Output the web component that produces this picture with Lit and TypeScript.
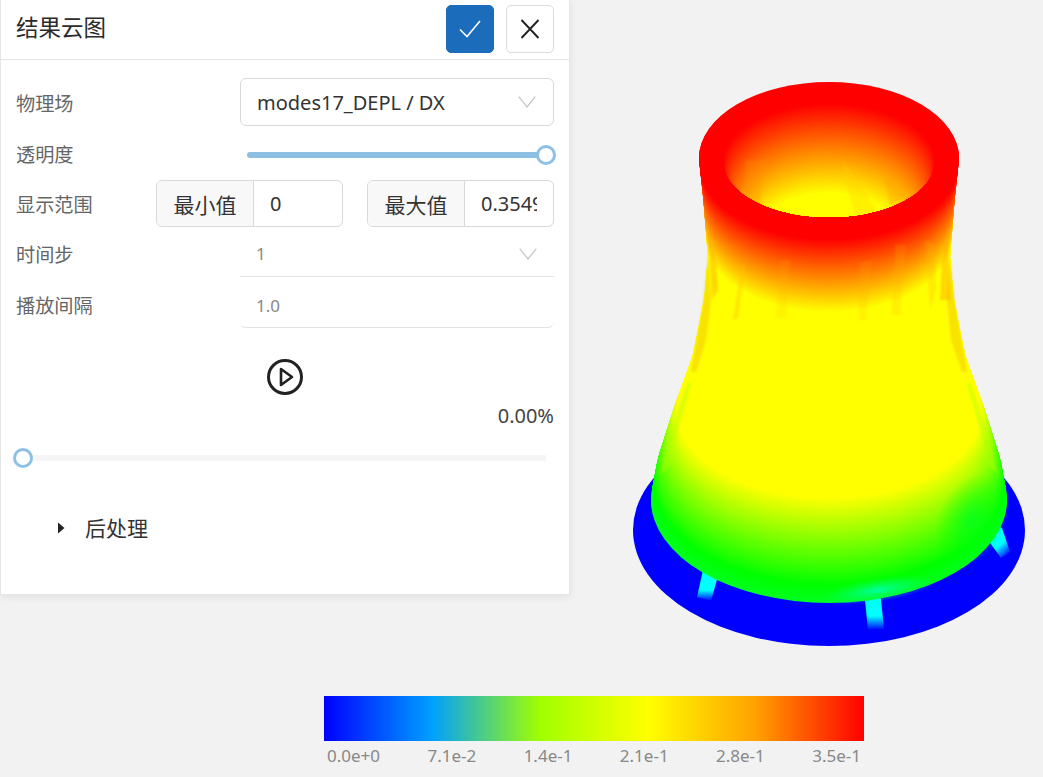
import { LitElement, html, css, svg } from "lit";
import { customElement } from "lit/decorators.js";

type P = [number, number];
const RX: P[] = [[158,130],[195,126],[257,121],[303,125],[337,131.5],[370,138.5],[425,158],[473,173],[500,178]];
const lerp = (a: number, b: number, t: number) => a + (b - a) * t;
const clamp = (t: number) => Math.max(0, Math.min(1, t));
function rxAt(cy: number) {
  for (let i = 0; i < RX.length - 1; i++) {
    if (cy <= RX[i + 1][0]) return lerp(RX[i][1], RX[i + 1][1], (cy - RX[i][0]) / (RX[i + 1][0] - RX[i][0]));
  }
  return 178;
}
const rgb = (r: number, g: number, b: number) => `rgb(${Math.round(r)},${Math.round(g)},${Math.round(b)})`;
function bodyColor(cy: number) {
  if (cy < 165) return rgb(255, 0, 0);
  if (cy < 242) return rgb(255, 255 * ((cy - 165) / 77), 0);
  if (cy < 410) return rgb(255, 255, 0);
  if (cy < 484) return rgb(255 * (1 - (cy - 410) / 74), 255, 0);
  return rgb(0, 255, 255 * clamp((cy - 484) / 40) * 0.3);
}

const rings = () => {
  const out = [];
  for (let cy = 500; cy >= 158; cy -= 1) {
    const rx = rxAt(cy);
    out.push(svg`<ellipse cx="829" cy=${cy} rx=${rx} ry=${rx * 0.578} fill=${bodyColor(cy)}></ellipse>`);
  }
  return out;
};
const innerRings = () => {
  const out = [];
  for (let d = 0; d <= 92; d += 1) {
    const t = d / 88;
    out.push(svg`<ellipse cx="829" cy=${160 + d} rx=${106 - d * 0.3} ry=${57 - d * 0.02} fill=${rgb(255, 255 * clamp(t), 0)}></ellipse>`);
  }
  return out;
};

const streaks: { p: string; c: string; o: number }[] = [
  { p: "708,258 711,300 706,340 696,372 691,372 703,305", c: "#f5d500", o: 0.7 },
  { p: "950,258 947,300 951,340 962,372 967,372 955,305", c: "#f5d500", o: 0.7 },
  { p: "688,382 691,384 676,436 670,466 660,474 668,440", c: "#b0ff00", o: 0.45 },
  { p: "970,382 967,384 982,436 988,466 998,474 990,440", c: "#b0ff00", o: 0.45 },
  { p: "708,232 716,262 718,290 712,300", c: "#ff9000", o: 0.35 },
  { p: "948,232 942,262 940,300 950,300", c: "#ff9000", o: 0.35 },
  { p: "745,262 738,318 733,320 741,270", c: "#ffc000", o: 0.4 },
  { p: "925,240 930,310 936,290 935,245", c: "#ffb000", o: 0.25 },
  { p: "895,245 892,315 900,315 906,245", c: "#ffb000", o: 0.2 },
  { p: "860,262 858,320 866,320 872,260", c: "#ffb000", o: 0.15 },
  { p: "780,260 776,318 786,318 790,260", c: "#ffb000", o: 0.15 },
];
const holeStreaks: { p: string; c: string; o: number }[] = [
  { p: "843,160 868,196 878,215 855,215 845,180", c: "#ffd000", o: 0.3 },
  { p: "872,158 905,196 890,205 882,170", c: "#ffa000", o: 0.3 },
  { p: "745,160 745,195 760,205 765,160", c: "#ff9000", o: 0.25 },
];

@customElement("app-root")
export class AppRoot extends LitElement {
  static styles = css`
    :host {
      display: block;
      position: relative;
      height: 777px;
      overflow: hidden;
      background: #f2f2f2;
      font-family: "Noto Sans", "Noto Sans CJK SC", sans-serif;
      color: #333;
    }
    .scene { position: absolute; left: 0; top: 0; }
    .panel {
      position: relative;
      box-sizing: border-box;
      width: 570px;
      height: 595px;
      background: #fff;
      border: 1px solid #e6e6e6;
      border-top: 0;
      box-shadow: 0 2px 8px rgba(0,0,0,.08);
    }
    .head {
      box-sizing: border-box;
      height: 60px;
      border-bottom: 1px solid #e4e4e4;
      display: flex;
      align-items: center;
      padding: 0 15px 2px 15px;
      gap: 12px;
    }
    .title { flex: 1; font-size: 22.5px; color: #2b2b2b; padding-bottom: 4px; }
    .btn {
      box-sizing: border-box;
      width: 48px;
      height: 48px;
      border-radius: 5px;
      border: 1px solid #dcdcdc;
      display: flex;
      align-items: center;
      justify-content: center;
      background: #fff;
    }
    .btn.primary { background: #1b6cba; border-color: #1b6cba; }
    .form { padding: 18px 15px 0 15px; }
    .row { display: flex; align-items: center; }
    .label { font-size: 19.2px; color: #666; width: 224px; line-height: 24px; flex: none; }
    .label.first { margin-top: 3px; }
    .select {
      box-sizing: border-box;
      flex: 1;
      height: 48px;
      border: 1px solid #d9d9d9;
      border-radius: 6px;
      display: flex;
      align-items: center;
      justify-content: space-between;
      padding: 0 17px 0 16px;
      font-size: 20px;
      color: #333;
    }
    .r-slider { height: 54px; padding-top: 4px; box-sizing: border-box; }
    .track { position: relative; height: 6px; }
    .track.op { flex: 1; margin: 0 8px 0 7px; background: #8cbfe2; border-radius: 3px; }
    .handle {
      position: absolute;
      box-sizing: border-box;
      width: 20px;
      height: 20px;
      top: -7px;
      border: 3px solid #8cc0e4;
      border-radius: 50%;
      background: #fff;
    }
    .track.op .handle { right: -10px; }
    .r-range { height: 47px; }
    .label.narrow { width: 140px; margin-top: 2px; }
    .group {
      box-sizing: border-box;
      height: 47px;
      width: 187px;
      border: 1px solid #d9d9d9;
      border-radius: 6px;
      display: flex;
      overflow: hidden;
      font-size: 20px;
    }
    .group + .group { margin-left: 24px; }
    .addon {
      box-sizing: border-box;
      flex: none;
      width: 97px;
      background: #f8f8f8;
      border-right: 1px solid #d9d9d9;
      display: flex;
      align-items: center;
      justify-content: center;
      color: #333;
      font-size: 21px;
    }
    .val {
      flex: 1;
      min-width: 0;
      margin: 0 16px;
      overflow: hidden;
      white-space: nowrap;
      display: flex;
      align-items: center;
      color: #333;
    }
    .lined {
      box-sizing: border-box;
      flex: 1;
      height: 50px;
      border-bottom: 1px solid #e2e2e2;
      display: flex;
      align-items: center;
      justify-content: space-between;
      padding: 5px 17px 1px 16px;
      font-size: 17px;
      color: #888;
    }
    .lined.round { border-radius: 0 0 6px 6px; height: 51px; padding-top: 7px; }
    .r-t { height: 50px; }
    .r-t .label { margin-top: 5px; }
    .r-u { height: 51px; }
    .r-u .label { margin-top: 7px; }
    .play { display: flex; justify-content: center; padding: 31px 0 0 0; margin-left: -1px; }
    .pct { text-align: right; font-size: 20px; color: #444; line-height: 24px; margin-top: 9px; }
    .progress {
      position: relative;
      height: 6px;
      margin: 27px 23px 0 22px;
      background: #f5f5f5;
    }
    .progress .handle { left: -10px; }
    .post {
      display: flex;
      align-items: center;
      margin-top: 52px;
      padding-left: 56px;
      font-size: 21px;
      color: #333;
      line-height: 30px;
    }
    .post svg { margin-right: 20px; }
    .legend { position: absolute; left: 324px; top: 696px; width: 540px; }
    .bar {
      height: 45px;
      background: linear-gradient(90deg, #0000ff 0%, #00a0ff 20%, #a0ff00 40%, #ffff00 60%, #ffa000 80%, #ff0000 100%);
    }
    .ticks {
      display: flex;
      justify-content: space-between;
      padding: 4px 3px 0 3px;
      font-size: 17px;
      line-height: 22px;
      color: #888;
    }
  `;

  render() {
    return html`
      <svg class="scene" width="1043" height="777" viewBox="0 0 1043 777">
        <defs>
          <linearGradient id="leg" x1="0" y1="0" x2="0" y2="1">
            <stop offset="0" stop-color="#00ffff"></stop>
            <stop offset="0.65" stop-color="#00ffff"></stop>
            <stop offset="1" stop-color="#0000ff"></stop>
          </linearGradient>
          <linearGradient id="leg3" x1="0.2" y1="0" x2="0.8" y2="1">
            <stop offset="0" stop-color="#00ffff"></stop>
            <stop offset="0.6" stop-color="#00ffff"></stop>
            <stop offset="1" stop-color="#0000ff"></stop>
          </linearGradient>
          <clipPath id="hole"><ellipse cx="829" cy="160" rx="106" ry="57"></ellipse></clipPath>
          <radialGradient id="spot" cx="0.5" cy="0.5" r="0.5">
            <stop offset="0" stop-color="#00ffb0" stop-opacity="0.9"></stop>
            <stop offset="1" stop-color="#00ff60" stop-opacity="0"></stop>
          </radialGradient>
          <radialGradient id="edge" cx="0.5" cy="0.5" r="0.5">
            <stop offset="0" stop-color="#00ff20" stop-opacity="0.8"></stop>
            <stop offset="1" stop-color="#00ff00" stop-opacity="0"></stop>
          </radialGradient>
          <filter id="soft" x="-20%" y="-20%" width="140%" height="140%"><feGaussianBlur stdDeviation="1.2"></feGaussianBlur></filter>
        </defs>
        <ellipse cx="829" cy="530" rx="196" ry="116" fill="#0000ff"></ellipse>
        <polygon points="703,570 718,576 711,601 697,597" fill="url(#leg)"></polygon>
        <polygon points="864,590 880,590 884,629 868,630" fill="url(#leg)"></polygon>
        <polygon points="995,525 1002,528 1010,552 1001,558 988,540" fill="url(#leg3)"></polygon>
        ${rings()}
        <ellipse cx="972" cy="520" rx="34" ry="48" fill="url(#edge)" transform="rotate(25 972 520)"></ellipse>
        <ellipse cx="878" cy="590" rx="58" ry="12" fill="url(#spot)" transform="rotate(-9 878 590)"></ellipse>
        <g filter="url(#soft)">
          ${streaks.map((s) => svg`<polygon points=${s.p} fill=${s.c} opacity=${s.o}></polygon>`)}
        </g>
        <ellipse cx="829" cy="158" rx="130" ry="76" fill="#ff0000"></ellipse>
        <g clip-path="url(#hole)">
          ${innerRings()}
          <g filter="url(#soft)">
            ${holeStreaks.map((s) => svg`<polygon points=${s.p} fill=${s.c} opacity=${s.o}></polygon>`)}
          </g>
        </g>
      </svg>

      <div class="panel">
        <div class="head">
          <div class="title">结果云图</div>
          <div class="btn primary">
            <svg width="24" height="20" viewBox="0 0 24 20"><path d="M2 10.5 L9 17.5 L22 2" fill="none" stroke="#fff" stroke-width="1.6"></path></svg>
          </div>
          <div class="btn">
            <svg width="20" height="20" viewBox="0 0 20 20"><path d="M1.5 1 L18.5 19 M18.5 1 L1.5 19" fill="none" stroke="#222" stroke-width="1.9"></path></svg>
          </div>
        </div>
        <div class="form">
          <div class="row">
            <div class="label first">物理场</div>
            <div class="select">
              <span>modes17_DEPL / DX</span>
              ${this.chevron()}
            </div>
          </div>
          <div class="row r-slider">
            <div class="label">透明度</div>
            <div class="track op"><div class="handle"></div></div>
          </div>
          <div class="row r-range">
            <div class="label narrow">显示范围</div>
            <div class="group"><div class="addon">最小值</div><div class="val">0</div></div>
            <div class="group"><div class="addon">最大值</div><div class="val">0.35496</div></div>
          </div>
          <div class="row r-t">
            <div class="label">时间步</div>
            <div class="lined"><span>1</span>${this.chevron()}</div>
          </div>
          <div class="row r-u">
            <div class="label">播放间隔</div>
            <div class="lined round"><span>1.0</span></div>
          </div>
          <div class="play">
            <svg width="36" height="36" viewBox="0 0 36 36">
              <circle cx="18" cy="18" r="16.5" fill="none" stroke="#222" stroke-width="3"></circle>
              <path d="M14 10 L25 18 L14 26 Z" fill="none" stroke="#222" stroke-width="2.6" stroke-linejoin="round"></path>
            </svg>
          </div>
          <div class="pct">0.00%</div>
        </div>
        <div class="progress"><div class="handle"></div></div>
        <div class="post">
          <svg width="8" height="12" viewBox="0 0 8 12"><path d="M1 0.5 L7.5 6 L1 11.5 Z" fill="#222"></path></svg>
          <span>后处理</span>
        </div>
      </div>

      <div class="legend">
        <div class="bar"></div>
        <div class="ticks">
          <span>0.0e+0</span><span>7.1e-2</span><span>1.4e-1</span><span>2.1e-1</span><span>2.8e-1</span><span>3.5e-1</span>
        </div>
      </div>
    `;
  }

  chevron() {
    return html`<svg width="18" height="12" viewBox="0 0 18 12"><path d="M0.7 0.7 L9 11 L17.3 0.7" fill="none" stroke="#c4c4c4" stroke-width="1.2"></path></svg>`;
  }
}
